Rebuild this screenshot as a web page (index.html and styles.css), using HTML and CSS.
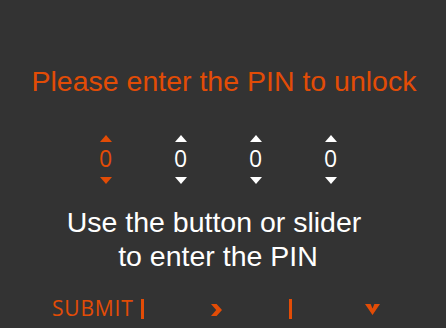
FILE: index.html
```html
<!DOCTYPE html>
<html lang="en">
<head>
<meta charset="utf-8">
<title>Unlock</title>
<link rel="stylesheet" href="styles.css">
</head>
<body>
<main class="screen">
  <h1 class="title">Please enter the PIN to unlock</h1>
  <div class="pin">
    <div class="digit active"><span class="tri up"></span><span class="num">0</span><span class="tri down"></span></div>
    <div class="digit"><span class="tri up"></span><span class="num">0</span><span class="tri down"></span></div>
    <div class="digit"><span class="tri up"></span><span class="num">0</span><span class="tri down"></span></div>
    <div class="digit"><span class="tri up"></span><span class="num">0</span><span class="tri down"></span></div>
  </div>
  <p class="hint"><span class="line first">Use the button or slider</span><span class="line">to enter the PIN</span></p>
  <div class="controls">
    <span class="submit">SUBMIT</span>
    <span class="bar bar1"></span>
    <svg class="chev right" width="11" height="12" viewBox="0 0 11 12"><polygon points="0,0 5.6,0 11,6 5.6,12 0,12 5.2,6"/></svg>
    <span class="bar bar2"></span>
    <svg class="chev down" width="15" height="11" viewBox="0 0 15 11"><polygon points="0,0 5.6,0 7.5,4.6 9.4,0 15,0 7.5,11"/></svg>
  </div>
</main>
</body>
</html>
```
FILE: styles.css
```css
html, body {
  margin: 0;
  padding: 0;
  background: #333333;
}
body {
  width: 446px;
  height: 328px;
  overflow: hidden;
}
.screen {
  width: 436px;
  padding-top: 64px;
  display: flex;
  flex-direction: column;
  color: #ffffff;
}
.title {
  margin: 0;
  padding-left: 12px;
  font-family: "Liberation Sans", Arial, sans-serif;
  font-weight: normal;
  font-size: 28.5px;
  line-height: 34px;
  color: #e24c06;
  text-align: center;
  white-space: nowrap;
}
.pin {
  margin-top: 37px;
  display: grid;
  grid-template-columns: repeat(4, 75px);
  justify-content: center;
}
.digit {
  display: flex;
  flex-direction: column;
  align-items: center;
  color: #ffffff;
}
.digit.active {
  color: #e24c06;
}
.tri {
  width: 0;
  height: 0;
  border-left: 6px solid transparent;
  border-right: 6px solid transparent;
}
.tri.up {
  border-bottom: 7.5px solid currentColor;
}
.tri.down {
  margin-top: 6.5px;
  border-top: 7.5px solid currentColor;
}
.num {
  margin-top: 4px;
  font-family: "Open Sans", "Noto Sans", sans-serif;
  font-size: 23px;
  line-height: 24px;
}
.hint {
  margin: 21.5px 0 0;
  font-family: "Liberation Sans", Arial, sans-serif;
  font-size: 28.5px;
  line-height: 34px;
  text-align: center;
  display: flex;
  flex-direction: column;
  align-items: center;
}
.line.first {
  padding-right: 8px;
}
.controls {
  margin-top: 22.5px;
  padding-left: 52px;
  height: 24px;
  display: flex;
  align-items: flex-start;
  color: #e24c06;
}
.submit {
  width: 89px;
  font-family: "Open Sans", "Noto Sans", sans-serif;
  font-size: 21px;
  line-height: 24px;
  letter-spacing: 0.8px;
  white-space: nowrap;
}
.bar {
  width: 2.5px;
  height: 20px;
  margin-top: 3.5px;
  background: #e24c06;
}
.chev {
  fill: #e24c06;
  display: block;
}
.chev.right {
  margin-left: 67.5px;
  margin-top: 8.5px;
}
.bar2 {
  margin-left: 67px;
}
.chev.down {
  margin-left: 73.5px;
  margin-top: 8.5px;
}
```
